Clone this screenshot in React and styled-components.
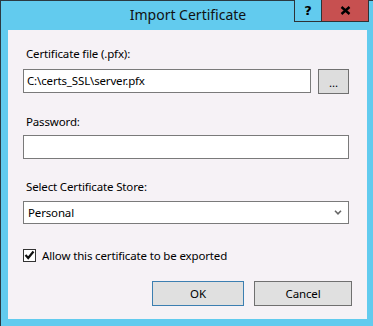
import React from "react";
import styled, { createGlobalStyle } from "styled-components";

const Global = createGlobalStyle`
  html, body { margin: 0; padding: 0; background: #62cbee; }
  body { font-family: "Noto Sans", "Open Sans", sans-serif; }
  * { box-sizing: border-box; }
`;

const Window = styled.div`
  width: 373px;
  height: 326px;
  background: #62cbee;
  border-left: 1px solid #2b3a42;
  border-top: 1px solid #2b3a42;
  display: flex;
  flex-direction: column;
`;

const TitleBar = styled.div`
  height: 29px;
  display: grid;
  grid-template-columns: 1fr auto 1fr;
  align-items: start;
`;

const Title = styled.div`
  grid-column: 2;
  font-size: 14px;
  line-height: 28px;
  color: #111;
  padding-left: 2px;
`;

const Caption = styled.div`
  grid-column: 3;
  justify-self: end;
  display: flex;
  margin-right: 4px;
  margin-top: -1px;
`;

const CapButton = styled.div`
  width: ${(p) => p.$w}px;
  height: 22px;
  background: ${(p) => p.$bg};
  border: 1px solid #2e3236;
  border-top: none;
  ${(p) => (p.$joined ? "border-left: none;" : "")}
  display: flex;
  align-items: center;
  justify-content: center;
  font-family: "DejaVu Sans", sans-serif;
  font-weight: bold;
  font-size: 13px;
  color: #000;
`;

const Client = styled.div`
  margin: 0 6px 7px 7px;
  flex: 1;
  background: #f6f2f6;
  padding: 16px 18px 0 15px;
  display: flex;
  flex-direction: column;
  font-size: 11.5px;
  letter-spacing: -0.15px;
  color: #000;
`;

const Label = styled.div`
  line-height: 16px;
  height: 16px;
  margin-top: ${(p) => p.$mt || 0}px;
  margin-bottom: ${(p) => p.$mb || 6}px;
  padding-left: 3px;
`;

const Row = styled.div`
  display: flex;
  gap: 7px;
`;

const TextBox = styled.div`
  flex: ${(p) => (p.$fixed ? "none" : 1)};
  height: ${(p) => p.$h || 24}px;
  background: #fff;
  border: 1px solid #7a7a7a;
  display: flex;
  align-items: center;
  padding-left: ${(p) => p.$pl || 3}px;
  line-height: 16px;
`;

const Browse = styled.div`
  width: 31px;
  height: 25px;
  background: #dddddd;
  border: 1px solid #707070;
  display: flex;
  align-items: center;
  justify-content: center;
  padding-top: 2px;
`;

const Chevron = styled.svg`
  margin-left: auto;
  margin-right: 6px;
`;

const CheckRow = styled.label`
  margin-top: 23px;
  display: flex;
  align-items: center;
  gap: 6px;
  height: 16px;
`;

const Box = styled.div`
  width: 13px;
  height: 13px;
  border: 1px solid #333;
  background: #fff;
  display: flex;
  align-items: center;
  justify-content: center;
`;

const Buttons = styled.div`
  margin-top: 18px;
  display: flex;
  justify-content: flex-end;
  gap: 10px;
  margin-right: -3px;
`;

const Button = styled.div`
  width: ${(p) => p.$w}px;
  height: 25px;
  background: #e0e0e0;
  border: 1px solid ${(p) => (p.$default ? "#3c7fb1" : "#707070")};
  display: flex;
  align-items: center;
  justify-content: center;
`;

export default function App() {
  return (
    <>
      <Global />
      <Window>
        <TitleBar>
          <Title>Import Certificate</Title>
          <Caption>
            <CapButton $w={28} $bg="#62cbee">?</CapButton>
            <CapButton $w={47} $bg="#c75050" $joined>
              <svg width="11" height="9" viewBox="0 0 11 9">
                <path d="M1.5 1 L9.5 8 M9.5 1 L1.5 8" stroke="#000" strokeWidth="2.4" />
              </svg>
            </CapButton>
          </Caption>
        </TitleBar>
        <Client>
          <Label $mb={7}>Certificate file (.pfx):</Label>
          <Row>
            <TextBox>C:\certs_SSL\server.pfx</TextBox>
            <Browse>...</Browse>
          </Row>
          <Label $mt={20} $mb={5}>Password:</Label>
          <TextBox $fixed />
          <Label $mt={20} $mb={6}>Select Certificate Store:</Label>
          <TextBox $fixed $h={23} $pl={4}>
            Personal
            <Chevron width="8" height="5" viewBox="0 0 8 5">
              <path d="M1 0.8 L4 3.8 L7 0.8" stroke="#666" strokeWidth="1.6" fill="none" />
            </Chevron>
          </TextBox>
          <CheckRow>
            <Box>
              <svg width="11" height="10" viewBox="0 0 11 10">
                <path d="M1.5 5 L4.2 8 L9.5 1.5" stroke="#111" strokeWidth="2.2" fill="none" />
              </svg>
            </Box>
            Allow this certificate to be exported
          </CheckRow>
          <Buttons>
            <Button $w={92} $default>OK</Button>
            <Button $w={98}>Cancel</Button>
          </Buttons>
        </Client>
      </Window>
    </>
  );
}
